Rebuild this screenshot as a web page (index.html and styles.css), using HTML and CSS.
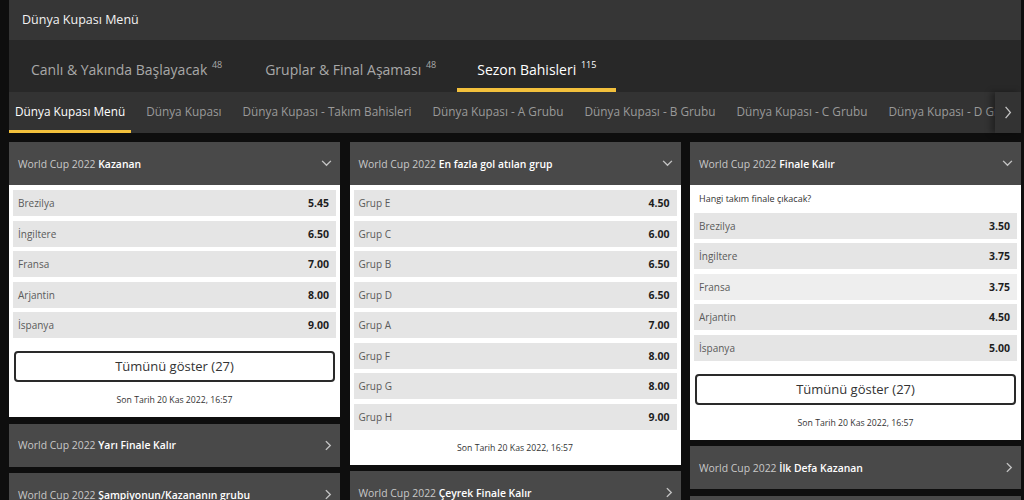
FILE: index.html
```html
<!DOCTYPE html>
<html lang="tr">
<head>
    <meta charset="utf-8">
    <title>Dünya Kupası Menü</title>
    <link rel="stylesheet" href="styles.css">
</head>
<body>
<div class="page">
    <div class="topbar">Dünya Kupası Menü</div>

    <div class="tabs">
        <div class="tab">Canlı &amp; Yakında Başlayacak <sup>48</sup></div>
        <div class="tab">Gruplar &amp; Final Aşaması <sup>48</sup></div>
        <div class="tab active">Sezon Bahisleri <sup>115</sup></div>
    </div>

    <div class="subnav">
        <div class="subnav-list">
            <div class="subnav-item active">Dünya Kupası Menü</div>
            <div class="subnav-item">Dünya Kupası</div>
            <div class="subnav-item">Dünya Kupası - Takım Bahisleri</div>
            <div class="subnav-item">Dünya Kupası - A Grubu</div>
            <div class="subnav-item">Dünya Kupası - B Grubu</div>
            <div class="subnav-item">Dünya Kupası - C Grubu</div>
            <div class="subnav-item">Dünya Kupası - D Grubu</div>
            <div class="subnav-item">Dünya Kupası - E Grubu</div>
        </div>
        <div class="subnav-arrow">
            <svg viewBox="0 0 10 16" width="8" height="13"><polyline points="2,1 8,8 2,15" /></svg>
        </div>
    </div>

    <div class="columns">
        <div class="column">
            <div class="card">
                <div class="card-head">
                    <span class="card-title">World Cup 2022 <b>Kazanan</b></span>
                    <svg class="chev" viewBox="0 0 12 8" width="11" height="7"><polyline points="1,1 6,6 11,1" /></svg>
                </div>
                <div class="card-body">
                    <div class="row"><span>Brezilya</span><b>5.45</b></div>
                    <div class="row"><span>İngiltere</span><b>6.50</b></div>
                    <div class="row"><span>Fransa</span><b>7.00</b></div>
                    <div class="row"><span>Arjantin</span><b>8.00</b></div>
                    <div class="row"><span>İspanya</span><b>9.00</b></div>
                    <div class="show-all">Tümünü göster (27)</div>
                    <div class="deadline">Son Tarih 20 Kas 2022, 16:57</div>
                </div>
            </div>
            <div class="card">
                <div class="card-head">
                    <span class="card-title">World Cup 2022 <b>Yarı Finale Kalır</b></span>
                    <svg class="chev" viewBox="0 0 8 12" width="7" height="11"><polyline points="1,1 6,6 1,11" /></svg>
                </div>
            </div>
            <div class="card">
                <div class="card-head">
                    <span class="card-title">World Cup 2022 <b>Şampiyonun/Kazananın grubu</b></span>
                    <svg class="chev" viewBox="0 0 8 12" width="7" height="11"><polyline points="1,1 6,6 1,11" /></svg>
                </div>
            </div>
        </div>

        <div class="column">
            <div class="card">
                <div class="card-head">
                    <span class="card-title">World Cup 2022 <b>En fazla gol atılan grup</b></span>
                    <svg class="chev" viewBox="0 0 12 8" width="11" height="7"><polyline points="1,1 6,6 11,1" /></svg>
                </div>
                <div class="card-body">
                    <div class="row"><span>Grup E</span><b>4.50</b></div>
                    <div class="row"><span>Grup C</span><b>6.00</b></div>
                    <div class="row"><span>Grup B</span><b>6.50</b></div>
                    <div class="row"><span>Grup D</span><b>6.50</b></div>
                    <div class="row"><span>Grup A</span><b>7.00</b></div>
                    <div class="row"><span>Grup F</span><b>8.00</b></div>
                    <div class="row"><span>Grup G</span><b>8.00</b></div>
                    <div class="row"><span>Grup H</span><b>9.00</b></div>
                    <div class="deadline">Son Tarih 20 Kas 2022, 16:57</div>
                </div>
            </div>
            <div class="card">
                <div class="card-head">
                    <span class="card-title">World Cup 2022 <b>Çeyrek Finale Kalır</b></span>
                    <svg class="chev" viewBox="0 0 8 12" width="7" height="11"><polyline points="1,1 6,6 1,11" /></svg>
                </div>
            </div>
        </div>

        <div class="column">
            <div class="card">
                <div class="card-head">
                    <span class="card-title">World Cup 2022 <b>Finale Kalır</b></span>
                    <svg class="chev" viewBox="0 0 12 8" width="11" height="7"><polyline points="1,1 6,6 11,1" /></svg>
                </div>
                <div class="card-body">
                    <div class="question">Hangi takım finale çıkacak?</div>
                    <div class="row"><span>Brezilya</span><b>3.50</b></div>
                    <div class="row"><span>İngiltere</span><b>3.75</b></div>
                    <div class="row hover"><span>Fransa</span><b>3.75</b></div>
                    <div class="row"><span>Arjantin</span><b>4.50</b></div>
                    <div class="row"><span>İspanya</span><b>5.00</b></div>
                    <div class="show-all">Tümünü göster (27)</div>
                    <div class="deadline">Son Tarih 20 Kas 2022, 16:57</div>
                </div>
            </div>
            <div class="card">
                <div class="card-head">
                    <span class="card-title">World Cup 2022 <b>İlk Defa Kazanan</b></span>
                    <svg class="chev" viewBox="0 0 8 12" width="7" height="11"><polyline points="1,1 6,6 1,11" /></svg>
                </div>
            </div>
            <div class="card">
                <div class="card-head">
                    <span class="card-title">World Cup 2022 <b>Finalist</b></span>
                    <svg class="chev" viewBox="0 0 8 12" width="7" height="11"><polyline points="1,1 6,6 1,11" /></svg>
                </div>
            </div>
        </div>
    </div>
</div>
</body>
</html>
```

FILE: styles.css
```css
body, html {
    margin: 0;
    padding: 0;
    background-color: #0e0e0e;
    font-family: "Open Sans", "Liberation Sans", sans-serif;
    height: 100%;
    overflow: hidden;
}

.page {
    margin-left: 9px;
    width: 1012px;
}

.topbar {
    height: 40px;
    line-height: 40px;
    padding-left: 13px;
    background-color: #363636;
    color: #f2f2f2;
    font-size: 12.5px;
}

.tabs {
    display: flex;
    height: 52px;
    background-color: #282828;
}

.tab {
    padding: 0 21px 0 22px;
    line-height: 50px;
    font-size: 14px;
    color: #a8a8a8;
    border-bottom: 4px solid transparent;
    box-sizing: border-box;
    height: 52px;
}

.tab sup {
    font-size: 9px;
    vertical-align: 7px;
    margin-left: 1px;
}

.tab.active {
    color: #ffffff;
    border-bottom-color: #f2c03c;
    padding: 0 20px;
}

.subnav {
    display: flex;
    height: 41px;
    background-color: #333333;
}

.subnav-list {
    display: flex;
    flex: 1;
    gap: 9px;
    overflow: hidden;
}

.subnav-item {
    padding: 0 6px;
    line-height: 38px;
    font-size: 11.8px;
    color: #9a9a9a;
    white-space: nowrap;
    border-bottom: 3px solid transparent;
}

.subnav-item.active {
    color: #ffffff;
    border-bottom-color: #f2c03c;
}

.subnav-arrow {
    width: 26px;
    display: flex;
    align-items: center;
    justify-content: center;
    background-color: #333333;
    box-shadow: -4px 0 6px rgba(0, 0, 0, 0.35);
}

.subnav-arrow svg, .chev {
    fill: none;
    stroke: #c4c4c4;
    stroke-width: 1.6;
}

.columns {
    display: grid;
    grid-template-columns: 1fr 1fr 1fr;
    column-gap: 9.5px;
    padding-top: 9px;
}

.column {
    display: flex;
    flex-direction: column;
    gap: 6.5px;
}

.card-head {
    display: flex;
    align-items: center;
    justify-content: space-between;
    height: 43px;
    padding: 0 8px 0 9px;
    background-color: #494949;
}

.card-title {
    font-size: 10.4px;
    color: #c8c8c8;
    white-space: nowrap;
}

.card-title b {
    color: #ffffff;
    font-weight: 600;
}

.card-body {
    background-color: #ffffff;
    padding: 5px 4px 0;
    display: flex;
    flex-direction: column;
    gap: 4.5px;
}

.question {
    font-size: 9px;
    color: #333333;
    line-height: 18px;
    padding: 0 5px;
}

.row {
    display: flex;
    justify-content: space-between;
    align-items: center;
    height: 26px;
    padding: 0 7px 0 5px;
    background-color: #e5e5e5;
    font-size: 10px;
}

.row.hover {
    background-color: #eeeeee;
}

.row span {
    color: #5a5a5a;
}

.row b {
    color: #1e1e1e;
    font-weight: 700;
    font-size: 10.5px;
}

.show-all {
    margin: 8.5px 1px 0;
    height: 27px;
    line-height: 27px;
    border: 2px solid #2a2a2a;
    border-radius: 4px;
    text-align: center;
    font-size: 13px;
    color: #333333;
}

.deadline {
    margin-top: -4.5px;
    padding: 10px 0 9px;
    line-height: 16px;
    text-align: center;
    font-size: 8.7px;
    color: #333333;
}
```
